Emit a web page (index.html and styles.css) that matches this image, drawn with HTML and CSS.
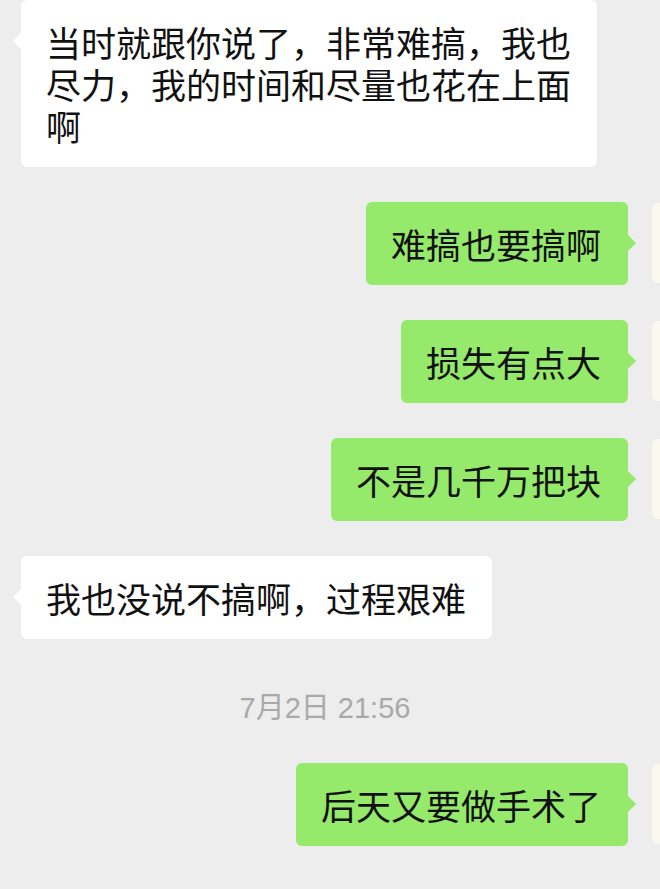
FILE: index.html
```html
<!DOCTYPE html>
<html lang="zh-CN">
<head>
    <meta charset="UTF-8">
    <meta name="viewport" content="width=device-width, initial-scale=1.0">
    <title>聊天记录</title>
    <link rel="stylesheet" href="styles.css">
</head>
<body>
    <div class="chat">
        <!-- received -->
        <div class="row in first">
            <div class="bubble">当时就跟你说了，非常难搞，我也尽力，我的时间和尽量也花在上面啊</div>
        </div>

        <!-- sent -->
        <div class="row out">
            <div class="bubble">难搞也要搞啊</div>
            <div class="avatar"></div>
        </div>

        <div class="row out">
            <div class="bubble">损失有点大</div>
            <div class="avatar"></div>
        </div>

        <div class="row out">
            <div class="bubble">不是几千万把块</div>
            <div class="avatar"></div>
        </div>

        <div class="row in">
            <div class="bubble">我也没说不搞啊，过程艰难</div>
        </div>

        <p class="time">7月2日 21:56</p>

        <div class="row out">
            <div class="bubble">后天又要做手术了</div>
            <div class="avatar"></div>
        </div>
    </div>
</body>
</html>
```

FILE: styles.css
```css
* {
    margin: 0;
    padding: 0;
    box-sizing: border-box;
}

body {
    font-family: "Noto Sans CJK SC", "Noto Sans", sans-serif;
    background-color: #ededed;
    height: 889px;
    overflow: hidden;
}

.chat {
    width: 660px;
    overflow: hidden;
}

.row {
    display: flex;
    align-items: flex-start;
    margin-bottom: 35px;
}

.row.in {
    padding-left: 21px;
}

.row.out {
    justify-content: flex-end;
    margin-right: -72px;
}

.bubble {
    position: relative;
    font-size: 35px;
    line-height: 42px;
    color: #111;
    padding: 21px 26px 20px 25px;
    border-radius: 6px;
    max-width: 576px;
}

.row.first .bubble {
    width: 576px;
    padding-right: 15px;
}

.row.in .bubble {
    background-color: #fff;
}

.row.out .bubble {
    background-color: #95ea6b;
    padding-right: 27px;
}

/* bubble tails */
.bubble::before {
    content: "";
    position: absolute;
    top: 32px;
    border: 9px solid transparent;
}

.row.in .bubble::before {
    left: -17px;
    border-right-color: #fff;
}

.row.out .bubble::before {
    right: -17px;
    border-left-color: #95ea6b;
}

.avatar {
    width: 80px;
    height: 80px;
    margin-left: 24px;
    margin-top: 1px;
    border-radius: 6px;
    background-color: #fbf8ef;
    flex-shrink: 0;
}

.time {
    text-align: center;
    font-family: "Liberation Sans", "Noto Sans CJK SC", sans-serif;
    font-size: 29px;
    line-height: 40px;
    color: #a9a9a9;
    margin: 49px 0 35px;
    padding-right: 10px;
}
```
